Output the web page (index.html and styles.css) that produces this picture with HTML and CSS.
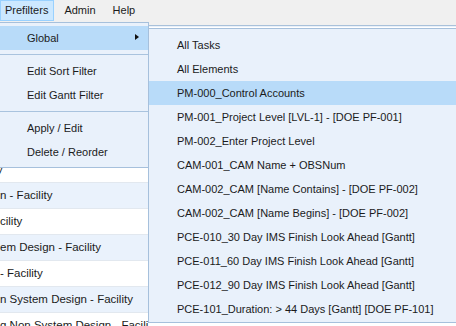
FILE: index.html
```html
<!DOCTYPE html>
<html>
<head>
<meta charset="utf-8">
<title>Prefilters menu</title>
<link rel="stylesheet" href="styles.css">
</head>
<body>
<div class="menubar">
  <span class="mb-item active">Prefilters</span>
  <span class="mb-item">Admin</span>
  <span class="mb-item">Help</span>
</div>
<div class="grid">
  <div class="row"></div>
  <div class="row alt"></div>
  <div class="row"></div>
  <div class="row alt"></div>
  <div class="row"></div>
  <div class="row"><span class="tail">y</span></div>
  <div class="row alt">n - Facility</div>
  <div class="row">cility</div>
  <div class="row alt">em Design - Facility</div>
  <div class="row">- Facility</div>
  <div class="row alt">n System Design - Facility</div>
  <div class="row">g Non System Design - Facili</div>
</div>

<div class="menu main-menu">
  <div class="item hl">Global<span class="arrow"></span></div>
  <div class="sep"></div>
  <div class="item">Edit Sort Filter</div>
  <div class="item">Edit Gantt Filter</div>
  <div class="sep"></div>
  <div class="item">Apply / Edit</div>
  <div class="item">Delete / Reorder</div>
</div>

<div class="menu sub-menu">
  <div class="item">All Tasks</div>
  <div class="item">All Elements</div>
  <div class="item hl">PM-000_Control Accounts</div>
  <div class="item">PM-001_Project Level [LVL-1] - [DOE PF-001]</div>
  <div class="item">PM-002_Enter Project Level</div>
  <div class="item">CAM-001_CAM Name + OBSNum</div>
  <div class="item">CAM-002_CAM [Name Contains] - [DOE PF-002]</div>
  <div class="item">CAM-002_CAM [Name Begins] - [DOE PF-002]</div>
  <div class="item">PCE-010_30 Day IMS Finish Look Ahead [Gantt]</div>
  <div class="item">PCE-011_60 Day IMS Finish Look Ahead [Gantt]</div>
  <div class="item">PCE-012_90 Day IMS Finish Look Ahead [Gantt]</div>
  <div class="item">PCE-101_Duration: &gt; 44 Days [Gantt] [DOE PF-101]</div>
</div>
</body>
</html>
```

FILE: styles.css
```css
html, body {
  margin: 0;
  padding: 0;
}

body {
  width: 456px;
  height: 326px;
  overflow: hidden;
  position: relative;
  background: #e8f0fa;
  font-family: "Liberation Sans", Arial, sans-serif;
  font-size: 11px;
  color: #1b1b1b;
}

.menubar {
  height: 25px;
  background: #f0f0f0;
  border-bottom: 1px solid #a9c1da;
  display: flex;
  align-items: flex-start;
  gap: 3px;
}

.mb-item {
  height: 21px;
  line-height: 21px;
  padding: 0 7px;
  box-sizing: border-box;
}

.mb-item.active {
  background: #cce8ff;
  border: 1px solid #99d1ff;
  line-height: 19px;
  padding-left: 4px;
  padding-right: 5px;
}

.grid {
  padding-top: 1px;
}

.row {
  height: 26px;
  box-sizing: border-box;
  border-bottom: 1px solid #e2e8ef;
  line-height: 25px;
  font-size: 11.5px;
  white-space: nowrap;
  overflow: hidden;
  background: #ffffff;
}

.row.alt {
  background: #eaf2fc;
}

.tail {
  display: inline-block;
  margin-left: -3px;
}

.menu {
  position: absolute;
  background: #e9f1fb;
  border: 1px solid #a6c0dc;
  box-sizing: border-box;
}

.main-menu {
  left: -1px;
  top: 22px;
  width: 150px;
  padding: 3px 0;
}

.main-menu .item {
  padding-left: 27px;
}

.sub-menu {
  left: 148px;
  top: 28px;
  width: 320px;
  padding: 4px 0 1px;
}

.sub-menu .item {
  padding-left: 28px;
}

.item {
  height: 24px;
  line-height: 24px;
  position: relative;
  white-space: nowrap;
}

.item.hl {
  background: #b8dbf9;
}

.sep {
  height: 9px;
  position: relative;
}

.sep::after {
  content: "";
  position: absolute;
  left: 0;
  right: 0;
  top: 4px;
  height: 1px;
  background: #a9c3de;
}

.arrow {
  position: absolute;
  right: 9px;
  top: 8px;
  width: 0;
  height: 0;
  border-left: 4px solid #111;
  border-top: 3.5px solid transparent;
  border-bottom: 3.5px solid transparent;
}
```
